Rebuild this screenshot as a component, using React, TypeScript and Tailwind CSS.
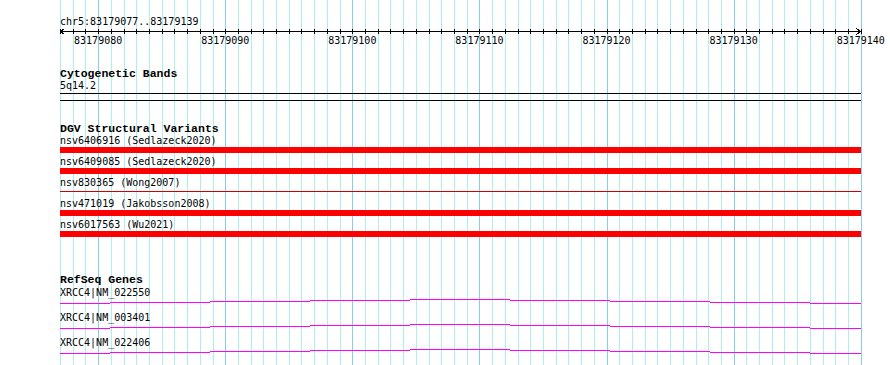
import React from 'react';

const X0 = 60;
const PX = 12.71;
const FIRST_BASE = 77;
const LAST_BASE = 140;
const TRACK_W = 801;

const bases = Array.from({ length: LAST_BASE - FIRST_BASE + 1 }, (_, i) => FIRST_BASE + i);
const xOf = (base: number) => Math.round(X0 + (base - FIRST_BASE) * PX);

const majorLabels = ['83179080', '83179090', '83179100', '83179110', '83179120', '83179130', '83179140'];

const variants = [
  { name: 'nsv6406916 (Sedlazeck2020)', thin: false },
  { name: 'nsv6409085 (Sedlazeck2020)', thin: false },
  { name: 'nsv830365 (Wong2007)', thin: true },
  { name: 'nsv471019 (Jakobsson2008)', thin: false },
  { name: 'nsv6017563 (Wu2021)', thin: false },
];

const genes = ['XRCC4|NM_022550', 'XRCC4|NM_003401', 'XRCC4|NM_022406'];

// intron hat, drawn as pixel steps: [start, end, y]
const hat: [number, number, number][] = [
  [0, 50, 4],
  [50, 150, 3],
  [150, 250, 2],
  [250, 350, 1],
  [350, 450, 0],
  [450, 550, 1],
  [550, 650, 2],
  [650, 750, 3],
  [750, 801, 4],
];

function Grid() {
  return (
    <svg className="absolute inset-0" width={890} height={365} shapeRendering="crispEdges">
      {bases.map((b) => (
        <rect
          key={b}
          x={xOf(b)}
          y={0}
          width={1}
          height={365}
          fill={b % 10 === 0 ? '#87ceeb' : '#afeeee'}
        />
      ))}
    </svg>
  );
}

function Axis() {
  return (
    <svg width={TRACK_W} height={7} className="block overflow-visible" shapeRendering="crispEdges">
      <rect x={0} y={3} width={TRACK_W} height={1} fill="#000" />
      {bases.map((b) => (
        <rect key={b} x={xOf(b) - X0} y={1} width={1} height={5} fill="#000" />
      ))}
      <path d="M4.5 0.5 L0.5 3.5 L4.5 6.5" fill="none" stroke="#000" strokeWidth={1} />
      <path d="M796.5 0.5 L800.5 3.5 L796.5 6.5" fill="none" stroke="#000" strokeWidth={1} />
    </svg>
  );
}

function GeneGlyph() {
  return (
    <svg width={TRACK_W} height={13} className="block" shapeRendering="crispEdges">
      {hat.map(([s, e, y]) => (
        <rect key={s} x={s} y={y} width={e - s} height={1} fill="#ff00ff" />
      ))}
    </svg>
  );
}

const mono = "font-['DejaVu_Sans_Mono',monospace] text-[10px] leading-[12px] text-black";
const title = "font-['Liberation_Mono',monospace] font-bold text-[11.5px] leading-[12px] text-black";

export default function App() {
  return (
    <div className="relative w-[890px] h-[365px] overflow-hidden bg-white">
      <Grid />
      <div className="relative pl-[60px] pt-[16px]">
        <div className={`${mono} h-[12px] whitespace-nowrap`}>chr5:83179077..83179139</div>
        <Axis />
        <div className="flex ml-[-25.4px] h-[12px]">
          {majorLabels.map((label) => (
            <div key={label} className={`${mono} w-[127.1px] shrink-0 text-center whitespace-nowrap`}>
              {label}
            </div>
          ))}
        </div>

        <div className={`${title} mt-[21px] h-[12px]`}>Cytogenetic Bands</div>
        <div className={`${mono} h-[12px]`}>5q14.2</div>
        <div className="mt-[1px] w-[801px] h-[8px] border-y border-black" />

        <div className={`${title} mt-[22px] h-[12px]`}>DGV Structural Variants</div>
        <div className="flex flex-col w-[801px]">
          {variants.map((v) => (
            <div key={v.name} className="mb-[3px]">
              <div className={`${mono} h-[12px] whitespace-nowrap`}>{v.name}</div>
              {v.thin ? (
                <div className="h-[6px] pt-[2px]">
                  <div className="h-[1px] bg-[#d00000]" />
                </div>
              ) : (
                <div className="h-[6px] bg-[#ff0000]" />
              )}
            </div>
          ))}
        </div>

        <div className={`${title} mt-[34px] mb-[1px] h-[12px]`}>RefSeq Genes</div>
        <div className="flex flex-col">
          {genes.map((g) => (
            <div key={g}>
              <div className={`${mono} h-[12px] whitespace-nowrap`}>{g}</div>
              <GeneGlyph />
            </div>
          ))}
        </div>
      </div>
    </div>
  );
}
